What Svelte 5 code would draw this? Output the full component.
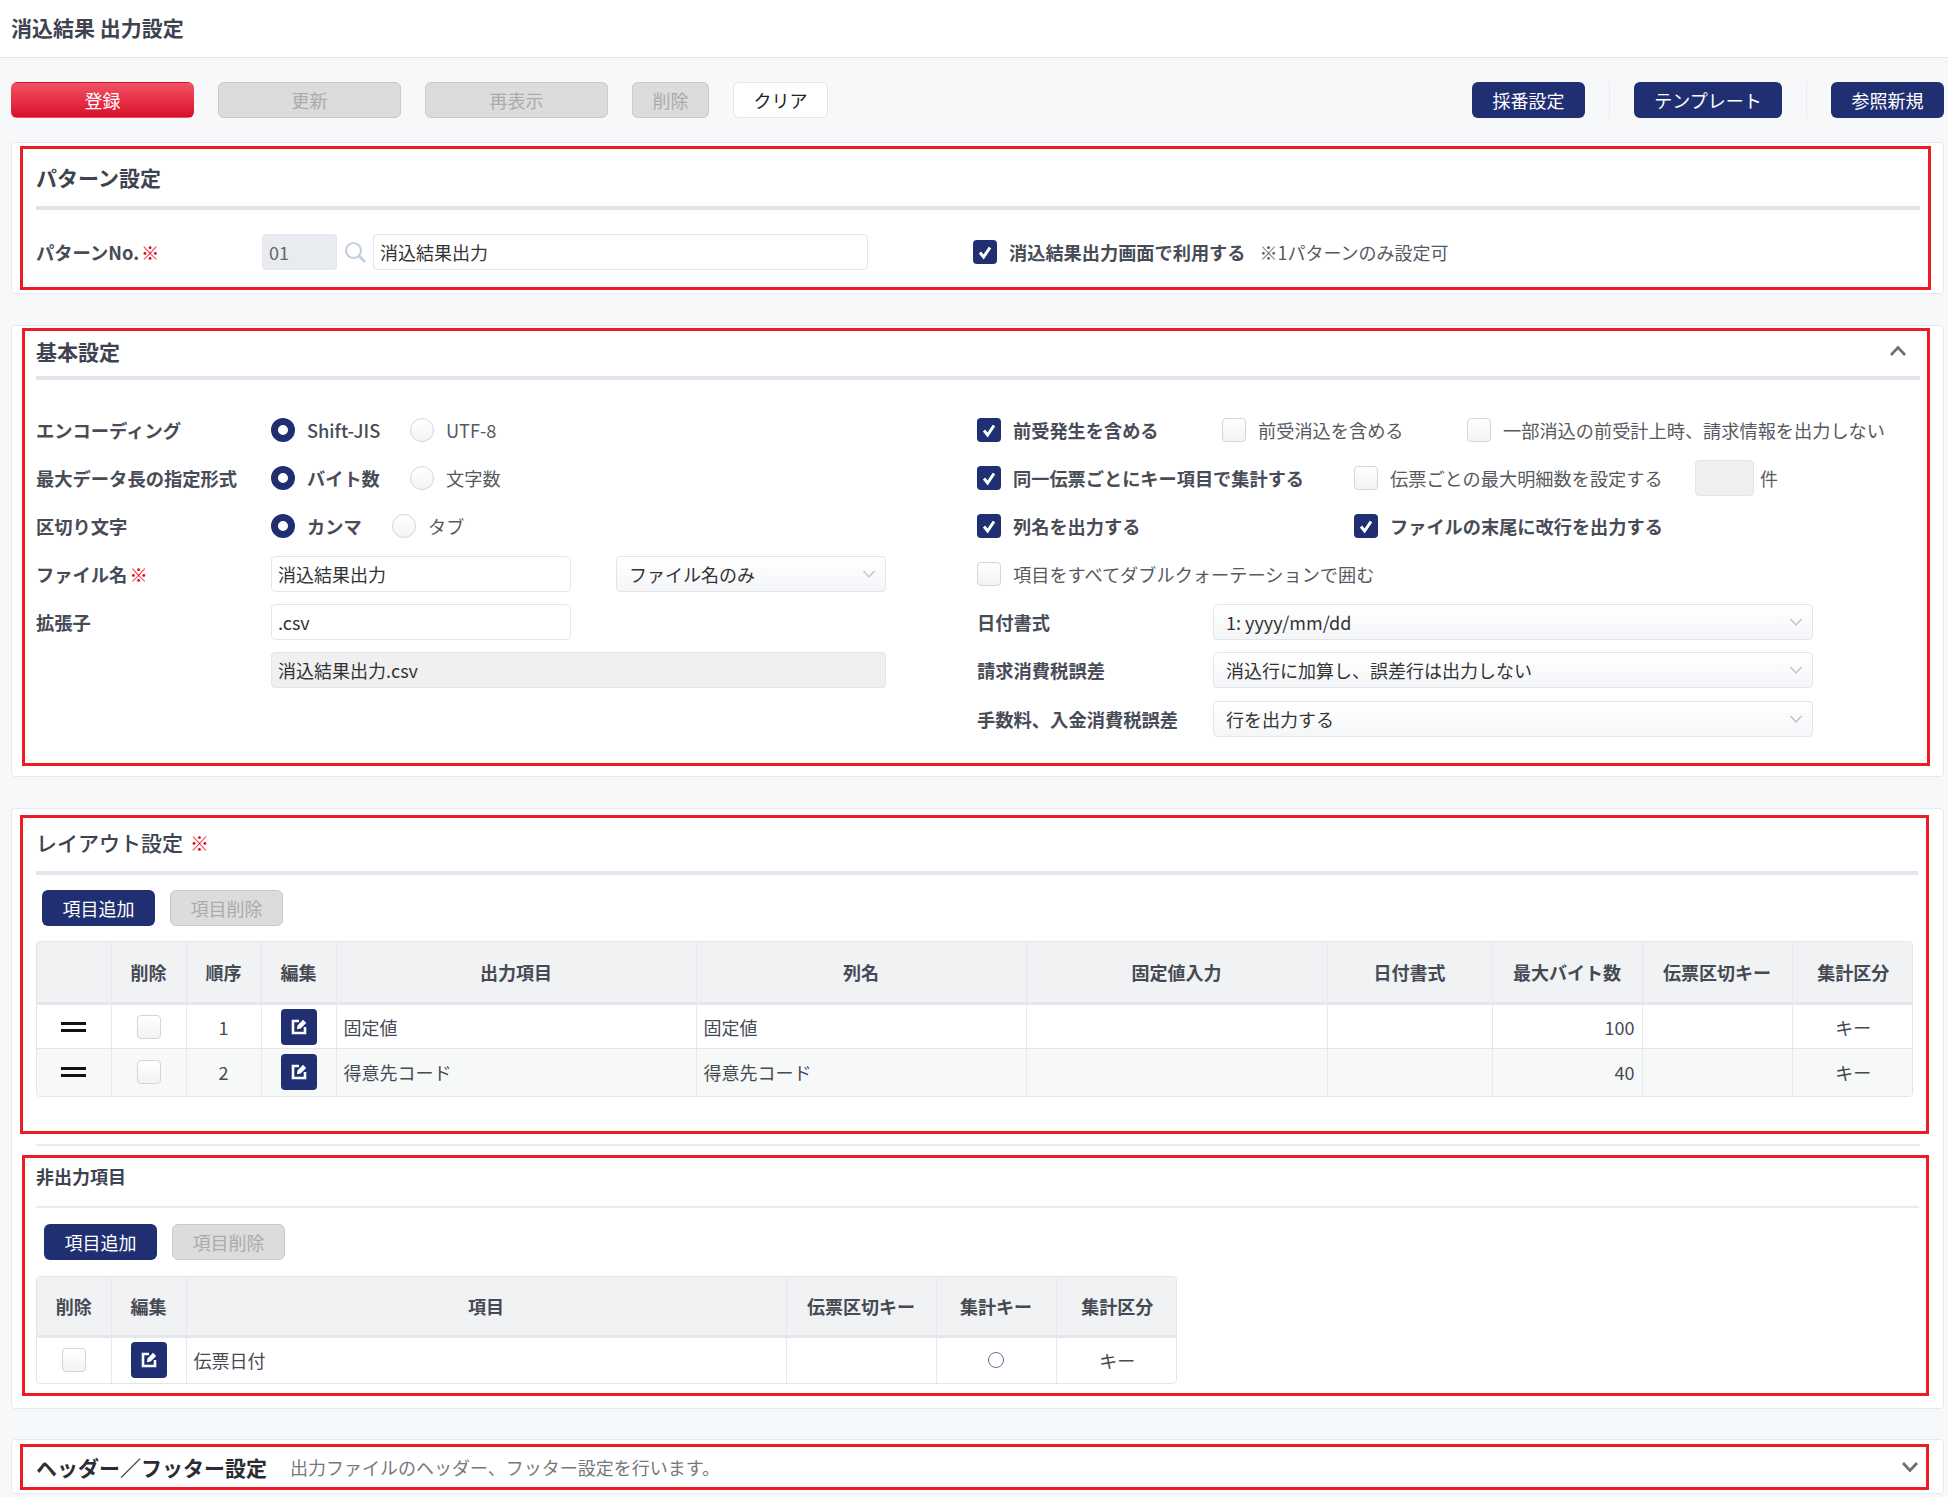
<script lang="ts">
	const layoutCols = [74, 75, 75, 75, 360, 330, 301, 165, 150, 150, 122];
	const layoutHead = ['', '削除', '順序', '編集', '出力項目', '列名', '固定値入力', '日付書式', '最大バイト数', '伝票区切キー', '集計区分'];
	const layoutRows = [
		{ no: 1, item: '固定値', name: '固定値', max: 100 },
		{ no: 2, item: '得意先コード', name: '得意先コード', max: 40 }
	];
	const hiddenCols = [74, 75, 600, 150, 120, 122];
	const hiddenHead = ['削除', '編集', '項目', '伝票区切キー', '集計キー', '集計区分'];
</script>

{#snippet check(on: boolean)}
	<span class="box" class:on>
		{#if on}
			<svg viewBox="0 0 24 24" width="24" height="24"><path d="M7 12.5l3.6 4.5L17 7.5" fill="none" stroke="#fff" stroke-width="3" /></svg>
		{/if}
	</span>
{/snippet}

{#snippet radio(on: boolean)}
	<span class="radio" class:on></span>
{/snippet}

{#snippet chevron()}
	<svg class="sel-arrow" viewBox="0 0 14 10" width="14" height="10"><path d="M1.5 2l5.5 6 5.5-6" fill="none" stroke="#bcc3d0" stroke-width="1.5" /></svg>
{/snippet}

{#snippet edit()}
	<span class="edit">
		<svg viewBox="0 0 20 20" width="20" height="20">
			<path d="M10 4H4v12h12v-6" fill="none" stroke="#fff" stroke-width="2.6" />
			<path d="M8.5 8.5L14 2.8l3.2 3.2-5.5 5.5-3.8.7z" fill="#fff" />
		</svg>
	</span>
{/snippet}

<div class="page">
	<header class="top">消込結果 出力設定</header>

	<div class="toolbar">
		<button class="btn danger wide">登録</button>
		<button class="btn off wide">更新</button>
		<button class="btn off wide">再表示</button>
		<button class="btn off del">削除</button>
		<button class="btn plain clear">クリア</button>
		<div class="toolbar-right">
			<button class="btn navy r1">採番設定</button>
			<span class="sep"></span>
			<button class="btn navy r2">テンプレート</button>
			<span class="sep"></span>
			<button class="btn navy r1">参照新規</button>
		</div>
	</div>

	<section class="card c1">
		<div class="mark m1">
			<h2 class="head h1">パターン設定</h2>
			<div class="rule"></div>
			<div class="pattern-row">
				<span class="label pattern-label">パターンNo.<em class="req">※</em></span>
				<span class="field no-field">01</span>
				<svg class="search" viewBox="0 0 22 22" width="22" height="22"><circle cx="9.5" cy="9.5" r="7.5" fill="none" stroke="#c5d0de" stroke-width="2.2" /><path d="M15 15l6 6" stroke="#c5d0de" stroke-width="2.8" /></svg>
				<span class="field name-field">消込結果出力</span>
				<label class="opt use-opt">{@render check(true)}<b>消込結果出力画面で利用する</b></label>
				<span class="note">※1パターンのみ設定可</span>
			</div>
		</div>
	</section>

	<section class="card c2">
		<div class="mark m2">
			<div class="head h2">
				<h2>基本設定</h2>
				<svg viewBox="0 0 18 12" width="18" height="12"><path d="M2 10l7-7.5 7 7.5" fill="none" stroke="#6f6f6f" stroke-width="2.6" /></svg>
			</div>
			<div class="rule"></div>
			<div class="basic">
				<div class="col">
					<div class="row">
						<span class="label left-label">エンコーディング</span>
						<label class="opt r-a">{@render radio(true)}<span class="latin">Shift-JIS</span></label>
						<label class="opt r-b">{@render radio(false)}<span>UTF-8</span></label>
					</div>
					<div class="row">
						<span class="label left-label">最大データ長の指定形式</span>
						<label class="opt r-a">{@render radio(true)}<span class="strong">バイト数</span></label>
						<label class="opt r-b">{@render radio(false)}<span>文字数</span></label>
					</div>
					<div class="row">
						<span class="label left-label">区切り文字</span>
						<label class="opt r-a">{@render radio(true)}<span class="strong">カンマ</span></label>
						<label class="opt r-c">{@render radio(false)}<span>タブ</span></label>
					</div>
					<div class="row">
						<span class="label left-label">ファイル名<em class="req">※</em></span>
						<span class="field file-field">消込結果出力</span>
						<span class="field select file-select">ファイル名のみ{@render chevron()}</span>
					</div>
					<div class="row">
						<span class="label left-label">拡張子</span>
						<span class="field file-field">.csv</span>
					</div>
					<div class="row">
						<span class="left-label"></span>
						<span class="field readonly">消込結果出力.csv</span>
					</div>
				</div>
				<div class="col">
					<div class="row">
						<label class="opt o1">{@render check(true)}<b>前受発生を含める</b></label>
						<label class="opt o1">{@render check(false)}<span>前受消込を含める</span></label>
						<label class="opt">{@render check(false)}<span>一部消込の前受計上時、請求情報を出力しない</span></label>
					</div>
					<div class="row">
						<label class="opt o2">{@render check(true)}<b>同一伝票ごとにキー項目で集計する</b></label>
						<label class="opt o3">{@render check(false)}<span>伝票ごとの最大明細数を設定する</span></label>
						<span class="field count"></span>
						<span class="unit">件</span>
					</div>
					<div class="row">
						<label class="opt o2">{@render check(true)}<b>列名を出力する</b></label>
						<label class="opt">{@render check(true)}<b>ファイルの末尾に改行を出力する</b></label>
					</div>
					<div class="row">
						<label class="opt">{@render check(false)}<span>項目をすべてダブルクォーテーションで囲む</span></label>
					</div>
					<div class="row">
						<span class="label right-label">日付書式</span>
						<span class="field select right-select">1: yyyy/mm/dd{@render chevron()}</span>
					</div>
					<div class="row">
						<span class="label right-label">請求消費税誤差</span>
						<span class="field select right-select">消込行に加算し、誤差行は出力しない{@render chevron()}</span>
					</div>
					<div class="row last-row">
						<span class="label right-label">手数料、入金消費税誤差</span>
						<span class="field select right-select">行を出力する{@render chevron()}</span>
					</div>
				</div>
			</div>
		</div>
	</section>

	<section class="card c3">
		<div class="mark m3">
			<h2 class="head h3">レイアウト設定<em class="req">※</em></h2>
			<div class="rule"></div>
			<div class="actions a3">
				<button class="btn navy r1">項目追加</button>
				<button class="btn off r1">項目削除</button>
			</div>
			<div class="table-wrap layout-table">
				<table>
					<colgroup>{#each layoutCols as w}<col style="width: {w}px" />{/each}</colgroup>
					<thead>
						<tr>{#each layoutHead as h}<th>{h}</th>{/each}</tr>
					</thead>
					<tbody>
						{#each layoutRows as r}
							<tr>
								<td class="c"><span class="grip"></span></td>
								<td class="c">{@render check(false)}</td>
								<td class="c">{r.no}</td>
								<td class="c">{@render edit()}</td>
								<td>{r.item}</td>
								<td>{r.name}</td>
								<td></td>
								<td></td>
								<td class="n">{r.max}</td>
								<td></td>
								<td class="c">キー</td>
							</tr>
						{/each}
					</tbody>
				</table>
			</div>
		</div>
		<div class="thin-rule"></div>
		<div class="mark m4">
			<h3 class="head h4">非出力項目</h3>
			<div class="rule thin"></div>
			<div class="actions a4">
				<button class="btn navy r1">項目追加</button>
				<button class="btn off r1">項目削除</button>
			</div>
			<div class="table-wrap hidden-table">
				<table>
					<colgroup>{#each hiddenCols as w}<col style="width: {w}px" />{/each}</colgroup>
					<thead>
						<tr>{#each hiddenHead as h}<th>{h}</th>{/each}</tr>
					</thead>
					<tbody>
						<tr>
							<td class="c">{@render check(false)}</td>
							<td class="c">{@render edit()}</td>
							<td>伝票日付</td>
							<td></td>
							<td class="c"><span class="mini-radio"></span></td>
							<td class="c">キー</td>
						</tr>
					</tbody>
				</table>
			</div>
		</div>
	</section>

	<section class="card c4">
		<div class="mark m5">
			<h2>ヘッダー／フッター設定</h2>
			<span class="sub">出力ファイルのヘッダー、フッター設定を行います。</span>
			<svg viewBox="0 0 18 12" width="18" height="12"><path d="M2 2l7 7.5L16 2" fill="none" stroke="#6f6f6f" stroke-width="2.8" /></svg>
		</div>
	</section>
</div>

<style>
	:global(body) {
		margin: 0;
		background: #f7f8fa;
	}

	.page {
		height: 1497px;
		font-family: 'Noto Sans CJK JP', 'Noto Sans', sans-serif;
		font-size: 18px;
		color: #454a54;
	}

	h2,
	h3 {
		margin: 0;
		font-size: 21px;
		font-weight: 700;
		color: #3e4350;
	}

	.top {
		height: 58px;
		box-sizing: border-box;
		padding: 11px 11px 0;
		background: #fff;
		border-bottom: 1px solid #e4e6ee;
		font-size: 21px;
		font-weight: 700;
		line-height: 32px;
		color: #3e4350;
	}

	.toolbar {
		display: flex;
		align-items: center;
		padding: 24px 4px 0 11px;
		gap: 24px;
	}

	.toolbar-right {
		margin-left: auto;
		display: flex;
		align-items: center;
		gap: 24px;
	}

	.sep {
		width: 1px;
		height: 36px;
		background: #e9ebf0;
	}

	.btn {
		height: 36px;
		box-sizing: border-box;
		padding: 0;
		border-radius: 6px;
		border: 1px solid transparent;
		font: inherit;
		font-size: 18px;
		line-height: 34px;
		text-align: center;
	}

	.danger {
		background: linear-gradient(#f25365, #d8102a);
		color: #fff;
	}

	.off {
		background: #dcdcdc;
		border-color: #c9c9c9;
		color: #ababab;
	}

	.plain {
		background: #fff;
		border-color: #e3e5ec;
		color: #222;
	}

	.navy {
		background: #202e72;
		color: #fff;
	}

	.wide {
		width: 183px;
	}

	.del {
		width: 77px;
	}

	.clear {
		width: 95px;
	}

	.r1 {
		width: 113px;
	}

	.r2 {
		width: 148px;
	}

	.card {
		margin: 0 4px 0 11px;
		background: #fff;
		border: 1px solid #e6e8ef;
		border-radius: 4px;
		box-sizing: border-box;
	}

	.c1 {
		margin-top: 24px;
		height: 152px;
		padding-top: 3px;
	}

	.c2 {
		margin-top: 31px;
		height: 452px;
		padding-top: 2px;
	}

	.c3 {
		margin-top: 31px;
		height: 601px;
		padding-top: 6px;
	}

	.c4 {
		margin-top: 30px;
		height: 55px;
		padding-top: 4px;
	}

	.mark {
		border: 3px solid #ed1c24;
		box-sizing: border-box;
	}

	.m1 {
		height: 144px;
		margin: 0 12px 0 8px;
	}

	.m2 {
		height: 438px;
		margin: 0 13px 0 10px;
	}

	.m3 {
		height: 319px;
		margin: 0 14px 0 8px;
	}

	.m4 {
		height: 241px;
		margin: 0 14px 0 10px;
	}

	.m5 {
		height: 46px;
		margin: 0 14px 0 8px;
		display: flex;
		align-items: center;
		padding: 0 7px 0 13px;
	}

	.m5 svg {
		margin-left: auto;
	}

	.m5 h2 {
		color: #2b2d33;
	}

	.sub {
		margin-left: 23px;
		color: #74787e;
		font-size: 18px;
	}

	.head {
		display: flex;
		align-items: center;
		box-sizing: border-box;
	}

	.h1 {
		height: 57px;
		padding: 0 0 2px 13px;
	}

	.h2 {
		height: 45px;
		padding: 0 20px 5px 11px;
		justify-content: space-between;
	}

	.h3 {
		height: 53px;
		padding: 0 0 5px 13px;
		font-weight: 500;
	}

	.h3 .req {
		margin-left: 7px;
		font-size: 19px;
	}

	.h4 {
		height: 48px;
		padding: 0 0 12px 11px;
		font-size: 18px;
	}

	.rule {
		height: 4px;
		background: #e1e5ee;
		margin: 0 8px 0 13px;
	}

	.m2 .rule,
	.m4 .rule {
		margin: 0 7px 0 11px;
	}

	.rule.thin {
		height: 2px;
		background: #e8ebf0;
	}

	.thin-rule {
		height: 2px;
		margin: 10px 23px 9px 24px;
		background: #e8ebf0;
	}

	.pattern-row {
		display: flex;
		align-items: center;
		margin: 24px 0 0 13px;
		height: 36px;
	}

	.pattern-label {
		width: 226px;
		font-size: 18px;
	}

	.req {
		margin-left: 2px;
		font-style: normal;
		color: #e60012;
		font-weight: 900;
	}

	.label {
		font-size: 18.3px;
		font-weight: 700;
		color: #474c56;
		white-space: nowrap;
	}

	.field {
		height: 36px;
		box-sizing: border-box;
		display: flex;
		align-items: center;
		padding: 0 6px;
		border: 1px solid #e2e4ee;
		border-radius: 4px;
		background: #fff;
		color: #333;
	}

	.no-field {
		width: 75px;
		background: #e8ebf0;
		color: #666;
	}

	.search {
		margin: 0 7px;
	}

	.name-field {
		width: 495px;
	}

	.opt {
		display: flex;
		align-items: center;
		gap: 12px;
		white-space: nowrap;
		color: #555a62;
		font-size: 18.2px;
	}

	.opt b {
		color: #474c56;
	}

	.use-opt {
		margin-left: 105px;
	}

	.note {
		margin-left: 14px;
		color: #555a62;
	}

	.box {
		width: 24px;
		height: 24px;
		flex: none;
		display: block;
		box-sizing: border-box;
		border: 1px solid #d3d5d9;
		border-radius: 4px;
		background: linear-gradient(#fff, #f2f3f5);
	}

	.box.on {
		border: 0;
		background: #202e72;
	}

	.box svg {
		display: block;
	}

	.radio {
		width: 24px;
		height: 24px;
		flex: none;
		box-sizing: border-box;
		border-radius: 50%;
		border: 1px solid #d3d5d9;
		background: linear-gradient(#fff, #f3f4f6);
	}

	.radio.on {
		border: 7px solid #202e72;
		background: #fff;
	}

	.mini-radio {
		display: block;
		width: 16px;
		height: 16px;
		box-sizing: border-box;
		border: 1px solid #5d7199;
		border-radius: 50%;
	}

	.strong {
		font-weight: 700;
		color: #474c56;
	}

	.latin {
		font-weight: 500;
		color: #474c56;
	}

	.basic {
		display: grid;
		grid-template-columns: 941px 1fr;
		padding: 32px 0 0 11px;
	}

	.col {
		display: flex;
		flex-direction: column;
		gap: 12px;
	}

	.row {
		display: flex;
		align-items: center;
		height: 36px;
	}

	.last-row {
		margin-top: 1px;
	}

	.left-label {
		width: 235px;
		flex: none;
	}

	.r-a {
		width: 139px;
	}

	.r-c {
		margin-left: -18px;
	}

	.file-field {
		width: 300px;
	}

	.select {
		position: relative;
		background: linear-gradient(#fff, #f5f6f8);
		padding-left: 12px;
	}

	.sel-arrow {
		position: absolute;
		right: 9px;
		top: 12px;
	}

	.file-select {
		width: 270px;
		margin-left: 45px;
	}

	.readonly {
		width: 615px;
		background: #f0f0f0;
	}

	.o1 {
		width: 245px;
	}

	.o2 {
		width: 377px;
	}

	.o3 {
		width: 341px;
	}

	.count {
		width: 59px;
		background: #f0f0f0;
	}

	.unit {
		margin-left: 6px;
		color: #555a62;
	}

	.right-label {
		width: 236px;
	}

	.right-select {
		width: 600px;
	}

	.actions {
		display: flex;
		gap: 15px;
	}

	.a3 {
		margin: 15px 0 15px 19px;
	}

	.a4 {
		margin: 16px 0 16px 19px;
	}

	.table-wrap {
		border: 1px solid #e3e5ec;
		border-radius: 4px;
		overflow: hidden;
		box-sizing: border-box;
	}

	.layout-table {
		width: 1877px;
		margin-left: 13px;
	}

	.hidden-table {
		width: 1141px;
		margin-left: 11px;
	}

	table {
		width: 100%;
		border-collapse: collapse;
		table-layout: fixed;
		color: #454a54;
	}

	th {
		height: 60px;
		padding: 0;
		background: #f1f2f4;
		border-right: 1px solid #e6e8ee;
		border-bottom: 3px solid #e5e7ed;
		font-weight: 700;
		font-size: 18px;
		white-space: nowrap;
	}

	.hidden-table th {
		height: 58px;
	}

	td {
		height: 46px;
		padding: 0 7px;
		border-right: 1px solid #e6e8ee;
		border-bottom: 1px solid #e3e5ec;
		box-sizing: border-box;
		white-space: nowrap;
	}

	.layout-table tbody tr:first-child td {
		height: 45px;
	}

	.layout-table tbody tr:last-child td {
		height: 47px;
	}

	th:last-child,
	td:last-child {
		border-right: 0;
	}

	tbody tr:last-child td {
		border-bottom: 0;
	}

	tbody tr:nth-child(2) td {
		background: #f7f8f8;
	}

	.c {
		text-align: center;
	}

	.c > span {
		margin: 0 auto;
	}

	.n {
		text-align: right;
	}

	.grip {
		display: block;
		width: 25px;
		height: 4px;
		border-top: 3px solid #111;
		border-bottom: 3px solid #111;
	}

	.edit {
		width: 36px;
		height: 36px;
		border-radius: 4px;
		background: #202e72;
		display: flex;
		align-items: center;
		justify-content: center;
	}
</style>
